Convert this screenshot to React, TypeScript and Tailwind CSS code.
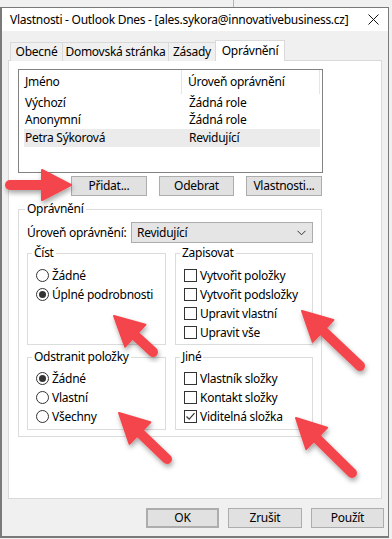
import React from "react";

const font = { fontFamily: '"Noto Sans", "Open Sans", sans-serif' };

function Radio({ label, checked }: { label: string; checked?: boolean }) {
  return (
    <div className="flex items-center h-[19px] gap-[3px]">
      <span className="w-[13px] h-[13px] rounded-full border border-[#333] bg-white flex items-center justify-center">
        {checked && <span className="w-[7px] h-[7px] rounded-full bg-[#333]" />}
      </span>
      <span>{label}</span>
    </div>
  );
}

function Check({ label, checked }: { label: string; checked?: boolean }) {
  return (
    <div className="flex items-center h-[19px] gap-[3px]">
      <span className="w-[13px] h-[13px] border border-[#333] bg-white flex items-center justify-center">
        {checked && (
          <svg width="11" height="11" viewBox="0 0 11 11">
            <path d="M1.5 5.5 L4.2 8.2 L9.5 2.2" fill="none" stroke="#333" strokeWidth="1.2" />
          </svg>
        )}
      </span>
      <span>{label}</span>
    </div>
  );
}

function Group({
  title,
  children,
  className,
  bodyClass,
}: {
  title: string;
  children: React.ReactNode;
  className?: string;
  bodyClass?: string;
}) {
  return (
    <fieldset className={"border border-[#dcdcdc] " + (className || "")}>
      <legend className="ml-[4px] px-[2px] leading-[16px]">{title}</legend>
      <div className={bodyClass}>{children}</div>
    </fieldset>
  );
}

function Btn({ children, className }: { children: React.ReactNode; className?: string }) {
  return (
    <div
      className={
        "h-[20px] flex items-center justify-center bg-[#e1e1e1] border border-[#adadad] " + (className || "")
      }
    >
      {children}
    </div>
  );
}

function Arrow({ t, p }: { t: [number, number]; p: [number, number] }) {
  const dx = p[0] - t[0];
  const dy = p[1] - t[1];
  const len = Math.hypot(dx, dy);
  const ux = dx / len;
  const uy = dy / len;
  const nx = -uy;
  const ny = ux;
  const L = 29;
  const W = 15;
  const bx = p[0] - ux * L;
  const by = p[1] - uy * L;
  const pts = `${p[0]},${p[1]} ${bx + nx * W},${by + ny * W} ${bx - nx * W},${by - ny * W}`;
  return (
    <g filter="url(#sh)">
      <line x1={t[0]} y1={t[1]} x2={bx + ux * 3} y2={by + uy * 3} stroke="#f3454b" strokeWidth="10" strokeLinecap="round" />
      <polygon points={pts} fill="#f3454b" stroke="#f3454b" strokeWidth="2" strokeLinejoin="round" />
    </g>
  );
}

export default function App() {
  return (
    <div
      className="relative w-[392px] h-[539px] bg-[#f0f0f0] overflow-hidden text-[12px] tracking-[-0.27px] text-black"
      style={font}
    >
      <div className="h-[7px] flex">
        <div className="ml-[233px] w-px h-full bg-[#b5b5b5]" />
      </div>
      <div className="w-[389px] h-[531px] bg-[#f0f0f0] border-t border-r border-l-2 border-b-2 border-[#7a7a7a] flex flex-col">
        {/* title bar */}
        <div className="h-[23px] bg-white flex items-center justify-between pl-[8px] pr-[8px]">
          <span>Vlastnosti - Outlook Dnes - [ales.sykora@innovativebusiness.cz]</span>
          <svg width="11" height="11" viewBox="0 0 11 11" className="mr-[1px]">
            <path d="M0.5 0.5 L10.5 10.5 M10.5 0.5 L0.5 10.5" stroke="#111" strokeWidth="1" />
          </svg>
        </div>
        {/* tabs */}
        <div className="mt-[9px] h-[21px] flex items-end pl-[8px] relative z-10">
          <div className="w-[52px] h-[19px] border-t border-l border-[#d9d9d9] bg-[#f0f0f0] flex items-center justify-center">
            Obecné
          </div>
          <div className="w-[106px] h-[19px] border-t border-l border-[#d9d9d9] bg-[#f0f0f0] flex items-center justify-center">
            Domovská stránka
          </div>
          <div className="w-[47px] h-[19px] border-t border-l border-[#d9d9d9] bg-[#f0f0f0] flex items-center justify-center">
            Zásady
          </div>
          <div className="w-[70px] h-[21px] border-t border-l border-r border-[#d9d9d9] bg-white flex items-center justify-center pb-[1px]">
            Oprávnění
          </div>
        </div>
        {/* panel */}
        <div className="ml-[6px] mt-[-1px] w-[374px] h-[439px] bg-white border border-[#d9d9d9] pl-[9px] pt-[8px]">
          {/* list */}
          <div className="w-[305px] h-[104px] border border-[#828282] bg-white">
            <div className="h-[24px] flex items-center">
              <div className="w-[163px] pl-[6px] h-full flex items-center border-r border-[#e5e5e5]">Jméno</div>
              <div className="w-[138px] pl-[6px] h-full flex items-center border-r border-[#e5e5e5]">Úroveň oprávnění</div>
            </div>
            <div className="ml-[5px] w-[296px]">
              <div className="h-[17.5px] flex items-center pl-[1px]">
                <span className="w-[164px]">Výchozí</span>
                <span>Žádná role</span>
              </div>
              <div className="h-[17.5px] flex items-center pl-[1px]">
                <span className="w-[164px]">Anonymní</span>
                <span>Žádná role</span>
              </div>
              <div className="h-[17.5px] flex items-center pl-[1px] bg-[#ebebeb]">
                <span className="w-[164px]">Petra Sýkorová</span>
                <span>Revidující</span>
              </div>
            </div>
          </div>
          {/* buttons */}
          <div className="mt-[3px] ml-[53px] flex gap-[12px]">
            <Btn className="w-[76px]">Přidat...</Btn>
            <Btn className="w-[75px]">Odebrat</Btn>
            <Btn className="w-[76px]">Vlastnosti...</Btn>
          </div>
          {/* Oprávnění group */}
          <fieldset className="mt-[5px] w-[304px] border border-[#dcdcdc]">
            <legend className="ml-[6px] px-[2px] leading-[16px]">Oprávnění</legend>
            <div className="pl-[8px] pb-[6px]">
              <div className="mt-[5px] flex items-center">
                <span className="w-[104px]">Úroveň oprávnění:</span>
                <div className="w-[182px] h-[21px] bg-[#e5e5e5] border border-[#acacac] flex items-center justify-between pl-[5px] pr-[6px]">
                  <span>Revidující</span>
                  <svg width="9" height="6" viewBox="0 0 9 6">
                    <path d="M0.5 0.8 L4.5 4.8 L8.5 0.8" fill="none" stroke="#333" strokeWidth="1" />
                  </svg>
                </div>
              </div>
              <div className="mt-[2px] grid grid-cols-[139px_138px] gap-x-[9px] gap-y-[4px]">
                <Group title="Číst" bodyClass="pl-[8px] pt-[5px] pb-[2px]">
                  <Radio label="Žádné" />
                  <Radio label="Úplné podrobnosti" checked />
                </Group>
                <Group title="Zapisovat" bodyClass="pl-[8px] pt-[5px] pb-[2px]">
                  <Check label="Vytvořit položky" />
                  <Check label="Vytvořit podsložky" />
                  <Check label="Upravit vlastní" />
                  <Check label="Upravit vše" />
                </Group>
                <Group title="Odstranit položky" bodyClass="pl-[8px] pt-[4px] pb-[3px]">
                  <Radio label="Žádné" checked />
                  <Radio label="Vlastní" />
                  <Radio label="Všechny" />
                </Group>
                <Group title="Jiné" bodyClass="pl-[8px] pt-[4px] pb-[3px]">
                  <Check label="Vlastník složky" />
                  <Check label="Kontakt složky" />
                  <Check label="Viditelná složka" checked />
                </Group>
              </div>
            </div>
          </fieldset>
        </div>
        {/* bottom buttons */}
        <div className="mt-[9px] flex justify-end pr-[4px] gap-[9px]">
          <Btn className="w-[73px] border-2 border-[#0078d7]">OK</Btn>
          <Btn className="w-[74px]">Zrušit</Btn>
          <Btn className="w-[73px]">Použít</Btn>
        </div>
      </div>
      <svg className="absolute inset-0 pointer-events-none" width="392" height="539">
        <defs>
          <filter id="sh" x="-30%" y="-30%" width="160%" height="160%">
            <feDropShadow dx="1" dy="3" stdDeviation="2.5" floodColor="#000" floodOpacity="0.35" />
          </filter>
        </defs>
        <Arrow t={[10, 185]} p={[71, 185]} />
        <Arrow t={[153, 352]} p={[114, 316]} />
        <Arrow t={[360, 366]} p={[302, 311]} />
        <Arrow t={[167, 459]} p={[119, 413]} />
        <Arrow t={[352, 473]} p={[296, 418]} />
      </svg>
    </div>
  );
}
